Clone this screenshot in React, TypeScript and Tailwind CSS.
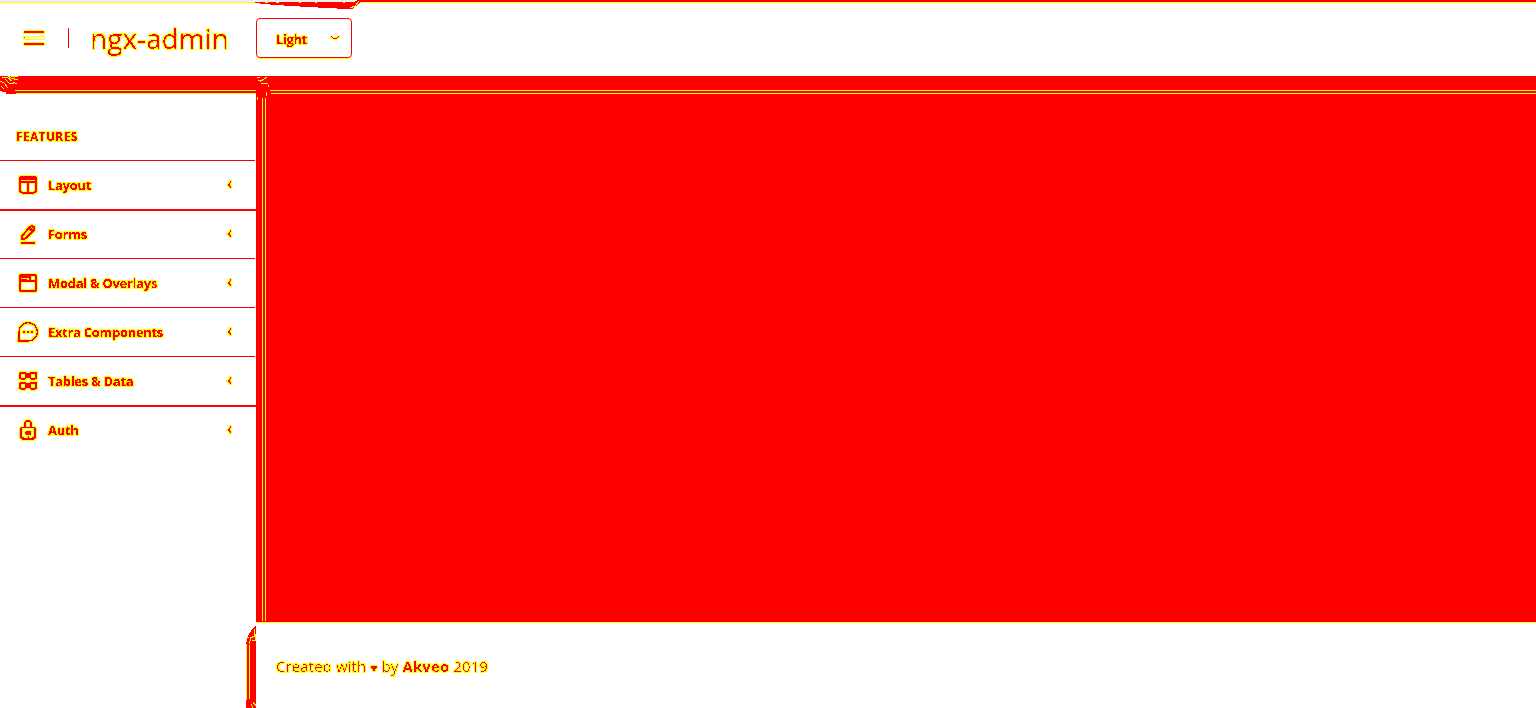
import type { ReactNode } from "react";

const ICONS: Record<string, ReactNode> = {
  layout: (
    <>
      <rect x="4" y="4" width="16" height="15.5" rx="2" />
      <path d="M4 6h16M4 9.3h16M12 9v11" />
    </>
  ),
  forms: (
    <>
      <path d="M5 21h14" strokeWidth="1.3" />
      <path d="M6 17.5l.5-4.3L14.2 5l1.6-1 2.4 1.3-.2 2.5-7.8 8.2z" />
      <path d="M13.500 7l2.400 2.200M14 5.500l3 3" strokeWidth="1.800" />
    </>
  ),
  browser: (
    <>
      <rect x="4" y="4" width="16" height="16" rx="2" />
      <path d="M4 10h16" strokeWidth="1.3" />
      <path d="M5 6h8M5 9h6M13.5 4.5v5" />
    </>
  ),
  message: (
    <>
      <path d="M3 21v-9a9.2 9.2 0 1 1 9 9z" strokeWidth="1.4" />
      <path d="M7 12h2m2 0h2m2 0h2" />
    </>
  ),
  grid: (
    <>
      <rect x="4" y="4" width="5.8" height="5.5" rx="1" />
      <rect x="14.2" y="4" width="5.8" height="5.5" rx="1" />
      <rect x="4" y="14" width="5.8" height="5.5" rx="1" />
      <rect x="14.2" y="14" width="5.8" height="5.5" rx="1" />
      <path d="M10 6.8h4M10 16.8h4" strokeWidth="5" />
    </>
  ),
  lock: (
    <>
      <rect x="5" y="9.5" width="14" height="11.5" rx="1" strokeWidth="1.3" />
      <path d="M9 9V6a3 3 0 0 1 6 0v3" strokeWidth="1.5" />
      <path d="M12 12.500v4M9 15h6M11 14h3v2h-3z" strokeWidth="1.500" />
      <path d="M6 19h2M16 19h2M12 18v2" strokeWidth="1" />
    </>
  ),
};

const ITEMS = [
  { label: "Layout", icon: "layout", line: "-bottom-px h-[2px] w-64" },
  { label: "Forms", icon: "forms", line: "bottom-0 h-px w-[255px]" },
  { label: "Modal & Overlays", icon: "browser", line: "bottom-0 h-px w-[255px]" },
  { label: "Extra Components", icon: "message", line: "bottom-0 h-px w-[255px]" },
  { label: "Tables & Data", icon: "grid", line: "-bottom-px h-[2px] w-64" },
  { label: "Auth", icon: "lock", line: "hidden" },
];

function Fringe({ id, intercept }: { id: string; intercept: number }) {
  return (
    <filter id={id} x="-10%" y="-30%" width="120%" height="160%" colorInterpolationFilters="sRGB">
      <feComponentTransfer in="SourceAlpha" result="core">
        <feFuncA type="linear" slope="40" intercept={intercept} />
      </feComponentTransfer>
      <feMorphology in="core" operator="dilate" radius="1" result="wide" />
      <feFlood floodColor="#ffff00" />
      <feComposite in2="wide" operator="in" result="yellow" />
      <feFlood floodColor="#ff0000" />
      <feComposite in2="core" operator="in" result="red" />
      <feMerge>
        <feMergeNode in="yellow" />
        <feMergeNode in="red" />
      </feMerge>
    </filter>
  );
}

function MenuIcon({ name }: { name: string }) {
  return (
    <svg
      viewBox="0 0 24 24"
      className="absolute left-4 top-[12px] h-6 w-6 overflow-visible [filter:url(#fringe-bold)]"
      fill="none"
      stroke="#f00"
      strokeWidth="2"
      strokeLinejoin="round"
      shapeRendering="crispEdges"
    >
      {ICONS[name]}
    </svg>
  );
}

export default function App() {
  return (
    <div className="relative flex h-[708px] w-[1536px] flex-col overflow-hidden bg-white font-['Open_Sans',sans-serif] text-[#f00]">
      <svg className="absolute h-0 w-0" aria-hidden="true">
        <Fringe id="fringe-bold" intercept={-20} />
        <Fringe id="fringe-thin" intercept={-28} />
      </svg>
      <header className="flex h-[76px] shrink-0 items-start">
        <svg viewBox="0 0 24 18" className="ml-[22px] mt-[29px] h-[18px] w-6" shapeRendering="crispEdges">
          <path d="M2 1h20v1h1v3h-22v-3h1zM1 7h22v4h-22zM1 13h22v3h-1v1h-20v-1h-1z" fill="#ff0" />
          <path d="M3 8h3v2h-3zM7 8h15v2h-15z" fill="#fff" />
          <path d="M2 2h20v2h-20zM2 14h20v2h-20zM2 8h1v1h-1z" fill="#f00" />
        </svg>
        <div className="ml-[22px] mt-7 h-5 w-px bg-[#f00]" />
        <div className="ml-[21px] mt-[18px] w-[166px] whitespace-nowrap text-[28px] leading-[40px] [filter:url(#fringe-thin)]">ngx-admin</div>
        <div className="mt-[18px] flex h-10 w-24 items-center justify-between rounded-[4px] border border-[#f00] pl-[19px] pr-[11px] shadow-[0_1px_0_#ff0]">
          <span className="mt-[3px] text-[13px] font-bold tracking-[-0.4px] [filter:url(#fringe-bold)]">Light</span>
          <svg viewBox="0 0 10 6" className="h-[6px] w-[10px]" shapeRendering="crispEdges">
            <path d="M0 1h3v1h4v-1h3v2h-2v1h-1v1h-4v-1h-1v-1h-2z" fill="#ff0" />
            <path d="M1 1h1v1h1v1h4v-1h1v-1h1v1h-1v1h-1v1h-4v-1h-1v-1h-1z" fill="#f00" />
          </svg>
        </div>
      </header>
      <div className="flex h-[18px] shrink-0 flex-col bg-[#f00]">
        <div className="mt-[14px] h-px bg-[#ff0]" />
        <div className="mt-[2px] h-px bg-[#ff0]" />
      </div>
      <div className="flex min-h-0 grow">
        <aside className="flex w-64 shrink-0 flex-col pt-[30px]">
          <div className="h-9 pl-4 text-[12px] font-bold leading-[25px] tracking-[0.35px] [filter:url(#fringe-bold)]">FEATURES</div>
          <div className="h-px w-[255px] bg-[#f00]" />
          {ITEMS.map((item) => (
            <div key={item.label} className="relative h-[49px] shrink-0">
              <MenuIcon name={item.icon} />
              <div className="pl-12 text-[13px] font-bold leading-[48px] tracking-[-0.3px] [filter:url(#fringe-bold)]">{item.label}</div>
              <svg viewBox="0 0 6 10" className="absolute left-[226px] top-[19px] h-[10px] w-[6px]" shapeRendering="crispEdges">
                <path d="M3 0h3v3h-1v3h1v3h-3v-1h-1v-2h-2v-2h2v-2h1z" fill="#ff0" />
                <path d="M4 1h1v2h-1v3h1v2h-1v-1h-1v-1h-1v-2h1v-1h1z" fill="#f00" />
              </svg>
              <div className={`absolute left-0 bg-[#f00] ${item.line}`} />
            </div>
          ))}
        </aside>
        <div className="flex grow flex-col">
          <main className="flex h-[529px] shrink-0 border-b border-[#ff0] bg-[#f00]">
            <div className="ml-[6px] mt-1 h-[523px] w-px bg-[#ff0]" />
            <div className="ml-[2px] mt-1 h-[523px] w-px bg-[#ff0]" />
          </main>
          <footer className="pl-5 pt-[30px] text-[15px] leading-[27px] tracking-[0.1px] [filter:url(#fringe-thin)]">
            Created with <span className="text-[12px]">♥</span> by <b>Akveo</b> 2019
          </footer>
        </div>
      </div>
      <svg className="pointer-events-none absolute inset-0" width="1536" height="708" shapeRendering="crispEdges">
        <path d="M0 0h353v2h-353z" fill="#eee" />
        <path d="M358 0h1178v2h-1178z" fill="#f00" />
        <path d="M0 2h1536v1h-1536z" fill="#ff0" />
        <path d="M252 2h102l4-2h4l-3 4-7 5h-6l-55-3-28-2z" fill="#f00" />
        <path d="M265 2.500h3M276 2.500h3M299 2.500h2M315 2.500h2M343 2.500h2M350 8l5-2 4-5" stroke="#ff0" fill="none" />
        <path d="M0 90h15v1h-15zM256 90h14v1h-14zM256 93h15v1h-15z" fill="#f00" />
        <path d="M0 91h2v1h4v1h9v1h-15z" fill="#fff" />
        <path d="M6 93h10v1h-10z" fill="#f00" />
        <path d="M2 77l6 1 4 3M8 76l3 2 4 1M0 81l4 2 4 5M5 79l4 4 5 1M13 82l4 2M1 86l3 3M11 77l7-1M14 79h4M257 77l3 1M260 82l4-3 3-2M258 80h3M264 83h4M261 84l4-1M257 97v3M266 92v4M268 85v2" stroke="#ff0" fill="none" />
        <path d="M256 625v83h-10v-64l2-8 4-7z" fill="#f00" />
        <path d="M246.500 644v56M249.500 645v54M249.500 644l1-6 4-2v-7M247 636l2 2M252 640h3v-6M251 704l2 4M253 702l3 4" stroke="#ff0" fill="none" />
      </svg>
    </div>
  );
}
